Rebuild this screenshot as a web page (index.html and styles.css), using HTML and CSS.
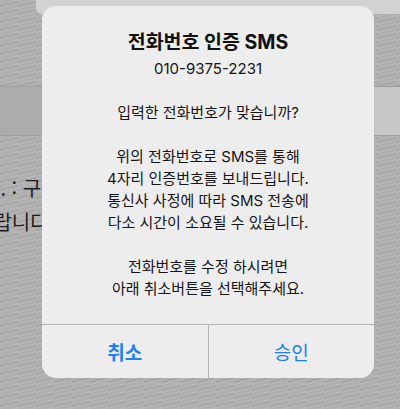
FILE: index.html
```html
<!DOCTYPE html>
<html lang="ko">
<head>
<meta charset="utf-8">
<title>전화번호 인증</title>
<link rel="stylesheet" href="styles.css">
</head>
<body>
<div class="screen">
  <div class="field"><span class="field-value">01093752231</span></div>
  <div class="band"></div>
  <div class="notice">
    <p class="notice-line first">다. : 구매하신</p>
    <p class="notice-line second">바랍니다</p>
  </div>

  <div class="alert" role="alertdialog">
    <div class="alert-body">
      <h1 class="alert-title">전화번호 인증 SMS</h1>
      <p class="alert-phone">010-9375-2231</p>
      <p class="alert-msg">입력한 전화번호가 맞습니까?<br><br>위의 전화번호로 SMS를 통해<br>4자리 인증번호를 보내드립니다.<br>통신사 사정에 따라 SMS 전송에<br>다소 시간이 소요될 수 있습니다.<br><br>전화번호를 수정 하시려면<br>아래 취소버튼을 선택해주세요.</p>
    </div>
    <div class="alert-actions">
      <button class="alert-btn cancel">취소</button>
      <button class="alert-btn">승인</button>
    </div>
  </div>
</div>
</body>
</html>
```

FILE: styles.css
```css
html, body {
  margin: 0;
  padding: 0;
}

body {
  width: 400px;
  height: 409px;
  overflow: hidden;
  font-family: "Inter", "Noto Sans CJK KR", sans-serif;
  background-color: #b1b1b1;
  background-image:
    linear-gradient(165deg, transparent 42%, rgba(0, 0, 0, 0.07) 42%, rgba(0, 0, 0, 0.07) 56%, transparent 56%),
    linear-gradient(165deg, transparent 42%, rgba(255, 255, 255, 0.08) 42%, rgba(255, 255, 255, 0.08) 56%, transparent 56%);
  background-size: 18px 8px, 18px 8px;
  background-position: 0 0, 9px 4px;
}

.screen {
  position: relative;
  width: 400px;
  height: 409px;
  overflow: hidden;
}

/* phone number input behind the dim layer */
.field {
  margin: -26px 0 0 36px;
  height: 40px;
  background: #d2d2d2;
  border-radius: 0 0 0 6px;
  overflow: hidden;
  display: flex;
  align-items: flex-end;
}

.field-value {
  display: block;
  padding-left: 9px;
  font-family: "Liberation Sans", sans-serif;
  font-size: 28px;
  line-height: 28px;
  color: #1c1c1c;
  margin-bottom: -21px;
}

.band {
  margin-top: 72px;
  height: 48px;
  border-top: 1px solid #9e9e9e;
  border-bottom: 1px solid #9e9e9e;
  background: linear-gradient(90deg, #ababab 0%, #b6b6b6 50%, #c8c8c8 100%);
}

.notice {
  margin-top: 35px;
  margin-left: -18px;
  white-space: nowrap;
}

.notice-line {
  margin: 0;
  font-family: "Noto Sans CJK KR", sans-serif;
  font-size: 20px;
  line-height: 34px;
  color: #1e1e1e;
}

.notice-line.second {
  margin-left: -7px;
}

/* alert dialog */
.alert {
  position: absolute;
  left: 42px;
  top: 6px;
  width: 332px;
  height: 372px;
  border-radius: 14px;
  background: #ededed;
  overflow: hidden;
  display: flex;
  flex-direction: column;
}

.alert-body {
  flex: 1;
  padding: 24px 16px 0;
  text-align: center;
  color: #151515;
}

.alert-title {
  margin: 0;
  font-size: 19.5px;
  line-height: 24px;
  font-weight: 700;
  color: #111;
}

.alert-phone {
  margin: 5px 0 0;
  font-size: 15px;
  line-height: 20px;
}

.alert-msg {
  margin: 23px 0 0;
  font-size: 15px;
  line-height: 22px;
}

.alert-actions {
  display: flex;
  height: 53px;
  border-top: 1px solid #b4b4b4;
}

.alert-btn {
  flex: 1;
  border: 0;
  margin: 0;
  padding: 0;
  background: transparent;
  font-family: "Inter", "Noto Sans CJK KR", sans-serif;
  font-size: 19px;
  color: #1c7ff3;
}

.alert-btn + .alert-btn {
  border-left: 1px solid #b4b4b4;
}

.alert-btn.cancel {
  font-weight: 700;
}
```
